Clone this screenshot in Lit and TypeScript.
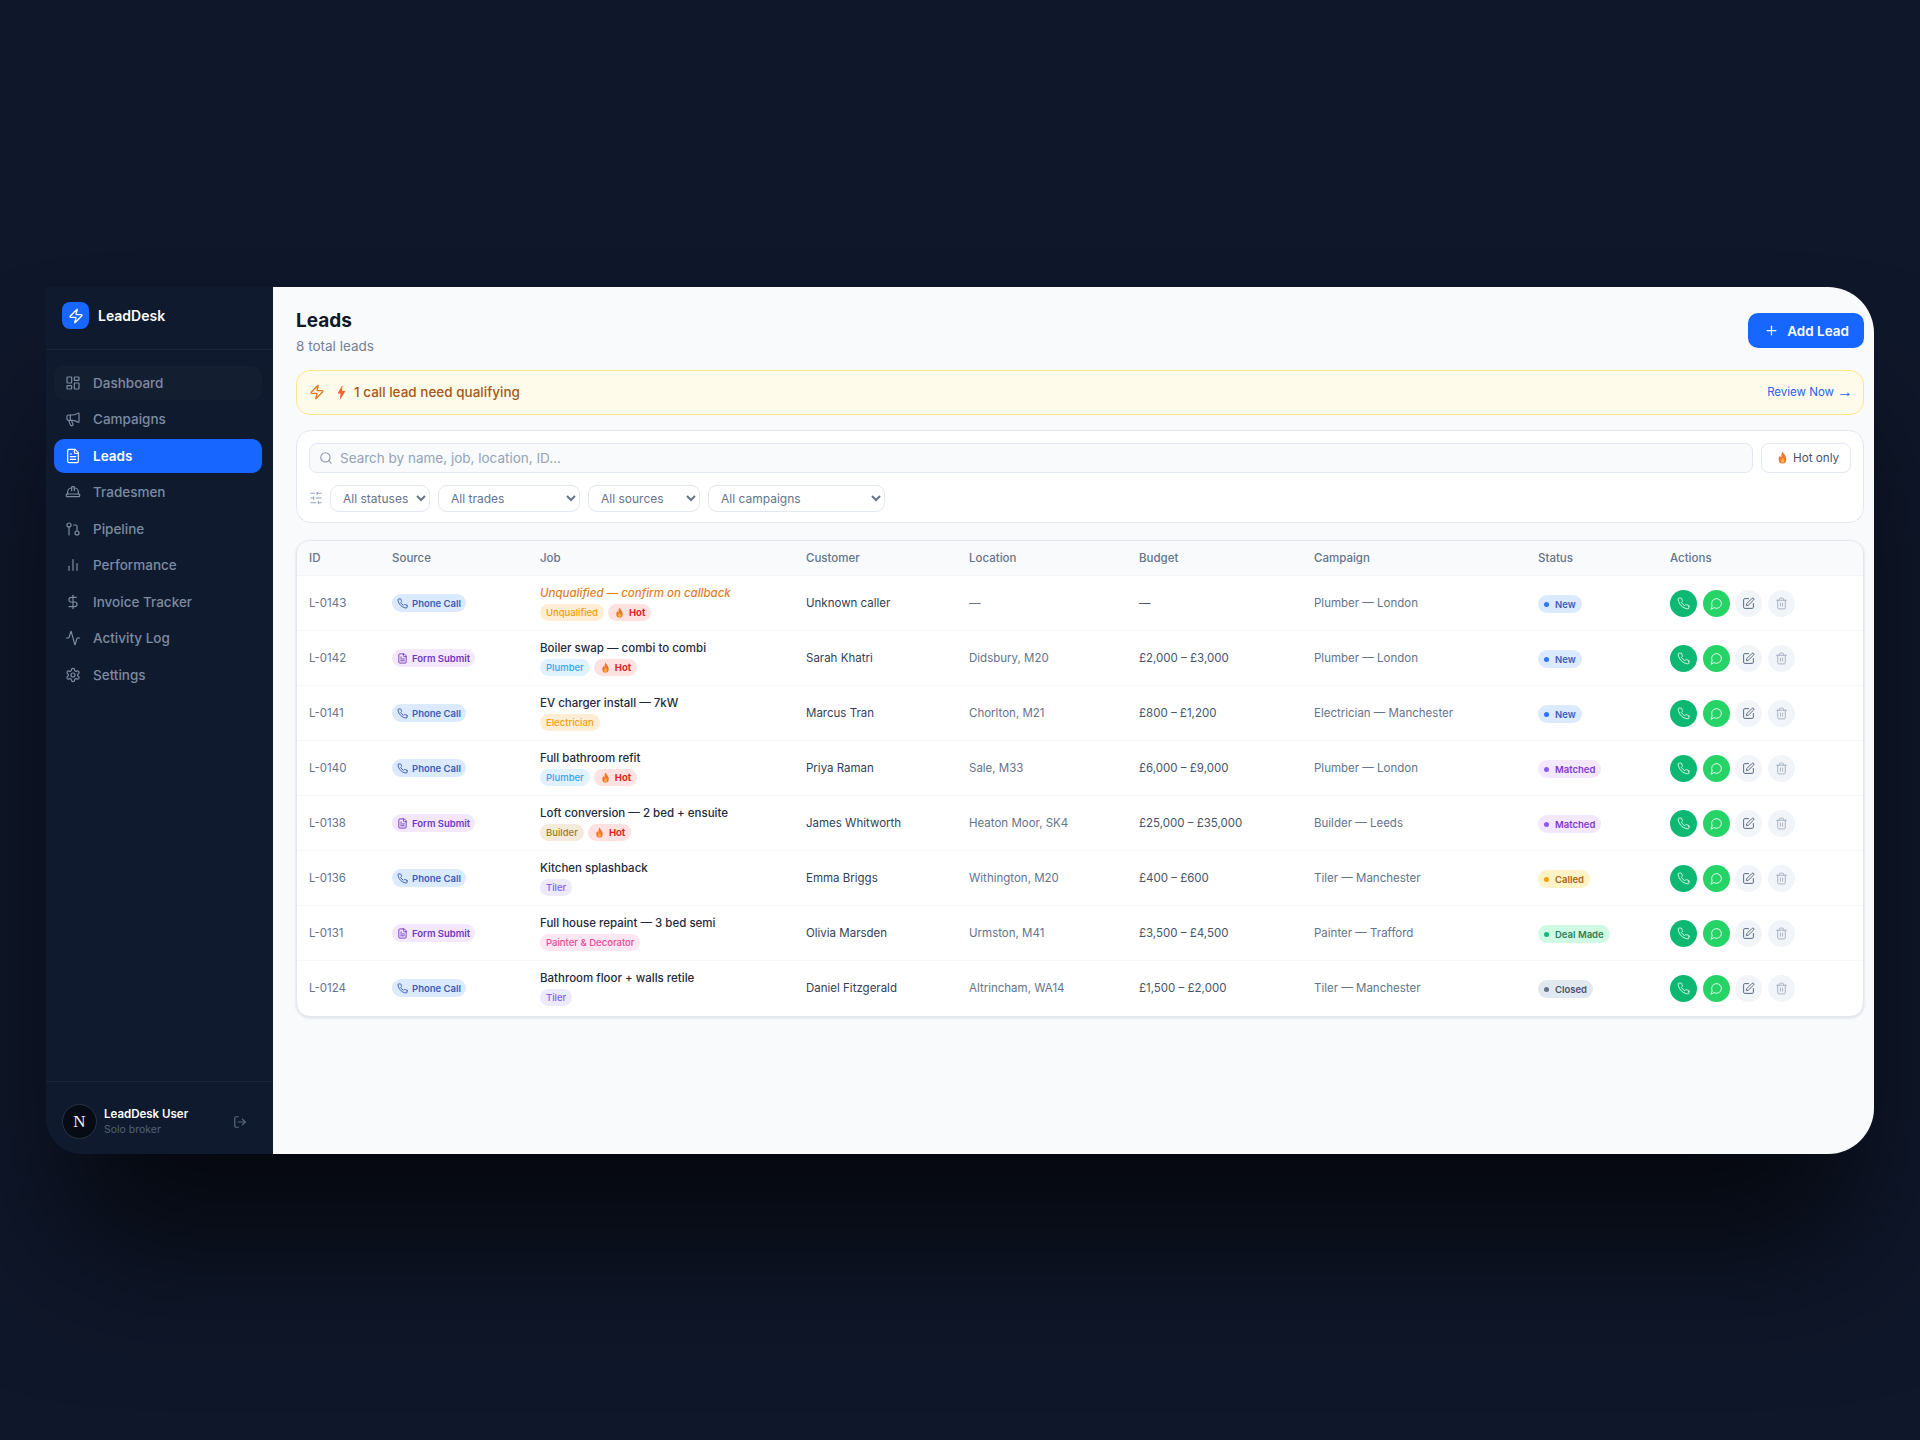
import { LitElement, css, html, svg } from "lit";
import { customElement } from "lit/decorators.js";

const ICONS: Record<string, unknown> = {
  dashboard: svg`<rect x="3" y="3" width="7" height="9" rx="1"/><rect x="14" y="3" width="7" height="5" rx="1"/><rect x="14" y="12" width="7" height="9" rx="1"/><rect x="3" y="16" width="7" height="5" rx="1"/>`,
  megaphone: svg`<path d="M11 6a13 13 0 0 0 8.400-2.800A1 1 0 0 1 21 4v12a1 1 0 0 1-1.600.8A13 13 0 0 0 11 14H5a2 2 0 0 1-2-2V8a2 2 0 0 1 2-2z"/><path d="M6 14a12 12 0 0 0 2.400 7.200 2 2 0 0 0 3.200-2.400A8 8 0 0 1 10 14"/><path d="M8 6v8"/>`,
  file: svg`<path d="M15 2H6a2 2 0 0 0-2 2v16a2 2 0 0 0 2 2h12a2 2 0 0 0 2-2V7Z"/><path d="M14 2v4a2 2 0 0 0 2 2h4"/><path d="M10 9H8"/><path d="M16 13H8"/><path d="M16 17H8"/>`,
  hat: svg`<path d="M10 10V5a1 1 0 0 1 1-1h2a1 1 0 0 1 1 1v5"/><path d="M14 6a6 6 0 0 1 6 6v3"/><path d="M4 15v-3a6 6 0 0 1 6-6"/><rect x="2" y="15" width="20" height="4" rx="1"/>`,
  pipeline: svg`<circle cx="18" cy="18" r="3"/><circle cx="6" cy="6" r="3"/><path d="M13 6h3a2 2 0 0 1 2 2v7"/><path d="M6 9v12"/>`,
  chart: svg`<path d="M18 20V10"/><path d="M12 20V4"/><path d="M6 20v-6"/>`,
  dollar: svg`<path d="M12 2v20"/><path d="M17 5H9.500a3.500 3.500 0 0 0 0 7h5a3.500 3.500 0 0 1 0 7H6"/>`,
  activity: svg`<path d="M22 12h-2.480a2 2 0 0 0-1.930 1.460l-2.350 8.360a.25.25 0 0 1-.48 0L9.240 2.180a.25.25 0 0 0-.48 0l-2.350 8.360A2 2 0 0 1 4.490 12H2"/>`,
  settings: svg`<path d="M12.220 2h-.44a2 2 0 0 0-2 2v.18a2 2 0 0 1-1 1.730l-.43.25a2 2 0 0 1-2 0l-.15-.08a2 2 0 0 0-2.730.73l-.22.38a2 2 0 0 0 .73 2.730l.15.1a2 2 0 0 1 1 1.720v.51a2 2 0 0 1-1 1.740l-.15.09a2 2 0 0 0-.73 2.730l.22.38a2 2 0 0 0 2.730.73l.15-.08a2 2 0 0 1 2 0l.43.25a2 2 0 0 1 1 1.730V20a2 2 0 0 0 2 2h.44a2 2 0 0 0 2-2v-.18a2 2 0 0 1 1-1.730l.43-.25a2 2 0 0 1 2 0l.15.08a2 2 0 0 0 2.730-.73l.22-.39a2 2 0 0 0-.73-2.730l-.15-.08a2 2 0 0 1-1-1.740v-.5a2 2 0 0 1 1-1.740l.15-.09a2 2 0 0 0 .73-2.730l-.22-.38a2 2 0 0 0-2.730-.73l-.15.08a2 2 0 0 1-2 0l-.43-.25a2 2 0 0 1-1-1.730V4a2 2 0 0 0-2-2z"/><circle cx="12" cy="12" r="3"/>`,
  zap: svg`<path d="M4 14a1 1 0 0 1-.78-1.630l9.900-10.200a.5.5 0 0 1 .86.46l-1.920 6.020A1 1 0 0 0 13 10h7a1 1 0 0 1 .78 1.630l-9.900 10.200a.5.5 0 0 1-.86-.46l1.920-6.020A1 1 0 0 0 11 14z"/>`,
  logout: svg`<path d="m16 17 5-5-5-5"/><path d="M21 12H9"/><path d="M9 21H5a2 2 0 0 1-2-2V5a2 2 0 0 1 2-2h4"/>`,
  search: svg`<circle cx="11" cy="11" r="8"/><path d="m21 21-4.300-4.300"/>`,
  sliders: svg`<path d="M21 4h-7"/><path d="M10 4H3"/><path d="M21 12h-9"/><path d="M8 12H3"/><path d="M21 20h-5"/><path d="M12 20H3"/><path d="M14 2v4"/><path d="M8 10v4"/><path d="M16 18v4"/>`,
  plus: svg`<path d="M5 12h14"/><path d="M12 5v14"/>`,
  phone: svg`<path d="M22 16.920v3a2 2 0 0 1-2.180 2 19.790 19.790 0 0 1-8.630-3.070 19.500 19.500 0 0 1-6-6 19.790 19.790 0 0 1-3.070-8.670A2 2 0 0 1 4.110 2h3a2 2 0 0 1 2 1.720 12.840 12.840 0 0 0 .7 2.810 2 2 0 0 1-.45 2.110L8.090 9.910a16 16 0 0 0 6 6l1.270-1.270a2 2 0 0 1 2.110-.45 12.840 12.840 0 0 0 2.810.7A2 2 0 0 1 22 16.920z"/>`,
  chat: svg`<path d="M7.900 20A9 9 0 1 0 4 16.100L2 22Z"/>`,
  pen: svg`<path d="M12 3H5a2 2 0 0 0-2 2v14a2 2 0 0 0 2 2h14a2 2 0 0 0 2-2v-7"/><path d="M18.375 2.625a1 1 0 0 1 3 3l-9.013 9.014a2 2 0 0 1-.853.505l-2.873.84a.5.5 0 0 1-.62-.62l.84-2.873a2 2 0 0 1 .506-.852z"/>`,
  trash: svg`<path d="M3 6h18"/><path d="M19 6v14c0 1-1 2-2 2H7c-1 0-2-1-2-2V6"/><path d="M8 6V4c0-1 1-2 2-2h4c1 0 2 1 2 2v2"/><path d="M10 11v6"/><path d="M14 11v6"/>`,
};

const NAV = [
  ["dashboard", "Dashboard"],
  ["megaphone", "Campaigns"],
  ["file", "Leads"],
  ["hat", "Tradesmen"],
  ["pipeline", "Pipeline"],
  ["chart", "Performance"],
  ["dollar", "Invoice Tracker"],
  ["activity", "Activity Log"],
  ["settings", "Settings"],
];

interface Lead {
  id: string;
  form?: boolean;
  job: string;
  trade: string;
  tradeClass: string;
  hot?: boolean;
  customer: string;
  location: string;
  budget: string;
  campaign: string;
  status: string;
}

const LEADS: Lead[] = [
  { id: "L-0143", job: "Unqualified — confirm on callback", trade: "Unqualified", tradeClass: "orange", hot: true, customer: "Unknown caller", location: "—", budget: "—", campaign: "Plumber — London", status: "New" },
  { id: "L-0142", form: true, job: "Boiler swap — combi to combi", trade: "Plumber", tradeClass: "sky", hot: true, customer: "Sarah Khatri", location: "Didsbury, M20", budget: "£2,000 – £3,000", campaign: "Plumber — London", status: "New" },
  { id: "L-0141", job: "EV charger install — 7kW", trade: "Electrician", tradeClass: "orange", customer: "Marcus Tran", location: "Chorlton, M21", budget: "£800 – £1,200", campaign: "Electrician — Manchester", status: "New" },
  { id: "L-0140", job: "Full bathroom refit", trade: "Plumber", tradeClass: "sky", hot: true, customer: "Priya Raman", location: "Sale, M33", budget: "£6,000 – £9,000", campaign: "Plumber — London", status: "Matched" },
  { id: "L-0138", form: true, job: "Loft conversion — 2 bed + ensuite", trade: "Builder", tradeClass: "tan", hot: true, customer: "James Whitworth", location: "Heaton Moor, SK4", budget: "£25,000 – £35,000", campaign: "Builder — Leeds", status: "Matched" },
  { id: "L-0136", job: "Kitchen splashback", trade: "Tiler", tradeClass: "violet", customer: "Emma Briggs", location: "Withington, M20", budget: "£400 – £600", campaign: "Tiler — Manchester", status: "Called" },
  { id: "L-0131", form: true, job: "Full house repaint — 3 bed semi", trade: "Painter & Decorator", tradeClass: "pink", customer: "Olivia Marsden", location: "Urmston, M41", budget: "£3,500 – £4,500", campaign: "Painter — Trafford", status: "Deal Made" },
  { id: "L-0124", job: "Bathroom floor + walls retile", trade: "Tiler", tradeClass: "violet", customer: "Daniel Fitzgerald", location: "Altrincham, WA14", budget: "£1,500 – £2,000", campaign: "Tiler — Manchester", status: "Closed" },
];

const COLS = [83, 148, 266, 163, 170, 175, 224, 132, 205];
const HEADS = ["ID", "Source", "Job", "Customer", "Location", "Budget", "Campaign", "Status", "Actions"];
const FILTERS = [
  ["All statuses", 100],
  ["All trades", 142],
  ["All sources", 112],
  ["All campaigns", 177],
] as const;

function icon(name: string) {
  return html`<svg class="icon" viewBox="0 0 24 24" fill="none" stroke="currentColor" stroke-width="2" stroke-linecap="round" stroke-linejoin="round">${ICONS[name]}</svg>`;
}

function flame() {
  return html`<svg class="flame" viewBox="0 0 24 24">
    <path fill="#f4742b" d="M12 1c1 4 7 7 7 14a7 8 0 0 1-14 0c0-3 1.500-5 3-6.500 0 2 .8 3 1.800 3.300C10 8 10 4 12 1z"/>
    <path fill="#fbb040" d="M12 12c.5 2 3.500 3.500 3.500 6.200a3.500 3.700 0 0 1-7 0c0-2.600 3-3.700 3.500-6.200z"/>
  </svg>`;
}

@customElement("app-root")
export class AppRoot extends LitElement {
  static styles = css`
    :host {
      display: flex;
      align-items: center;
      justify-content: center;
      width: 1920px;
      height: 1440px;
      background: #0f172a;
      font-family: Inter, "Liberation Sans", sans-serif;
      color: #1e293b;
    }
    * { box-sizing: border-box; }
    .icon { display: block; flex: none; }

    .window {
      display: flex;
      width: 1828px;
      height: 867px;
      border-radius: 0 46px 46px 36px;
      overflow: hidden;
      box-shadow: 0 110px 140px -20px rgba(0, 0, 0, 0.68);
    }

    .sidebar {
      display: flex;
      flex-direction: column;
      flex: none;
      width: 227px;
      background: #0f1a2e;
    }
    .brand {
      display: flex;
      align-items: center;
      gap: 9px;
      height: 63px;
      padding: 0 16px 4px;
      border-bottom: 1px solid #1a2538;
      color: #fff;
      font-size: 14px;
      font-weight: 600;
    }
    .brand-mark {
      display: flex;
      align-items: center;
      justify-content: center;
      width: 27px;
      height: 27px;
      border-radius: 8px;
      background: #1766ff;
    }
    .brand-mark .icon { width: 16px; height: 16px; }
    .nav {
      display: flex;
      flex-direction: column;
      gap: 2px;
      padding: 16px 11px 0 8px;
    }
    .nav-item {
      display: flex;
      align-items: center;
      gap: 12px;
      height: 34.5px;
      padding: 0 11px;
      border-radius: 10px;
      color: #7c8ba1;
      font-size: 13.5px;
      font-weight: 500;
    }
    .nav-item .icon { width: 16px; height: 16px; stroke-width: 1.8; }
    .nav-item.hover { background: #141e31; }
    .nav-item.active { background: #1766ff; color: #fff; font-weight: 600; }
    .user {
      display: flex;
      align-items: center;
      gap: 7px;
      margin-top: auto;
      height: 73px;
      padding: 8px 16px 0;
      border-top: 1px solid #1a2538;
    }
    .avatar {
      display: flex;
      align-items: center;
      justify-content: center;
      flex: none;
      width: 35px;
      height: 35px;
      border-radius: 50%;
      border: 1px solid #2a3342;
      background: #060b16;
      color: #f1f5f9;
      font-family: "Liberation Serif", serif;
      font-size: 17px;
    }
    .user-text { flex: 1; }
    .user-name { color: #fff; font-size: 11.5px; font-weight: 600; line-height: 15px; }
    .user-role { color: #526077; font-size: 10.5px; line-height: 15px; }
    .user .icon { width: 14px; height: 14px; margin-right: 10px; color: #5b6b82; }

    .main {
      flex: 1;
      padding: 19px 10px 0 23px;
      background: #f8fafc;
    }
    .head {
      display: flex;
      align-items: center;
      justify-content: space-between;
      height: 50px;
      margin-bottom: 14px;
    }
    h1 {
      margin: 0 0 1px;
      color: #0f172a;
      font-size: 19px;
      font-weight: 700;
      line-height: 30px;
    }
    .total { color: #71819a; font-size: 13.5px; line-height: 19px; }
    .add {
      display: flex;
      align-items: center;
      gap: 8px;
      height: 35px;
      padding: 0 15px 0 16px;
      border: 0;
      border-radius: 10px;
      background: #1766ff;
      color: #fff;
      font: 600 13.5px Inter, sans-serif;
    }
    .add .icon { width: 15px; height: 15px; }

    .alert {
      display: flex;
      align-items: center;
      height: 45px;
      padding: 0 10px 0 12px;
      margin-bottom: 15px;
      border: 1px solid #fde68a;
      border-radius: 14px;
      background: #fffbeb;
      color: #a8571a;
      font-size: 13.5px;
      font-weight: 500;
    }
    .alert .icon { width: 16px; height: 16px; color: #f07c1e; }
    .bolt { width: 13px; height: 15px; margin: 0 6px 0 10px; flex: none; }
    .review {
      display: flex;
      align-items: center;
      gap: 3px;
      margin-left: auto;
      color: #2563eb;
      font-size: 11.5px;
      font-weight: 400;
    }
    .arrow { font-family: "Liberation Sans", sans-serif; font-size: 16px; line-height: 1; }

    .filters {
      height: 93px;
      padding: 12px;
      margin-bottom: 17px;
      border: 1px solid #e2e8f0;
      border-radius: 15px;
      background: #fff;
    }
    .search-row { display: flex; gap: 8px; margin-bottom: 12px; }
    .search {
      display: flex;
      flex: 1;
      align-items: center;
      gap: 7px;
      height: 30px;
      padding: 0 9px;
      border: 1px solid #e2e8f0;
      border-radius: 8px;
      background: #f8fafc;
      color: #94a3b8;
      font-size: 13.5px;
    }
    .search .icon { width: 14px; height: 14px; color: #8795a8; stroke-width: 1.8; }
    .hot-only {
      display: flex;
      align-items: center;
      gap: 4px;
      width: 90px;
      height: 30px;
      padding: 0 0 0 14px;
      border: 1px solid #e2e8f0;
      border-radius: 8px;
      background: #fff;
      color: #475569;
      font: 400 11.7px Inter, sans-serif;
    }
    .hot-only .flame { width: 13px; height: 13px; }
    .select-row { display: flex; align-items: center; gap: 8px; }
    .select-row > .icon { width: 14px; height: 14px; color: #94a3b8; margin-right: -1px; stroke-width: 1.8; }
    select {
      height: 27px;
      padding: 0 1px 0 8px;
      border: 1px solid #e2e8f0;
      border-radius: 9px;
      background: #fff;
      color: #64748b;
      font: 400 12px Inter, sans-serif;
    }

    .card {
      overflow: hidden;
      border: 1px solid #e2e8f0;
      border-radius: 14px;
      background: #fff;
      box-shadow: 0 1px 3px rgba(15, 23, 42, 0.12);
    }
    table { width: 100%; border-collapse: collapse; table-layout: fixed; }
    th {
      height: 35px;
      padding: 0 0 0 12px;
      background: #f8fafc;
      border-bottom: 1px solid #f1f5f9;
      color: #64748b;
      font-size: 11.5px;
      font-weight: 500;
      text-align: left;
    }
    td {
      height: 55px;
      padding: 0 0 0 12px;
      border-bottom: 1px solid #f6f8fb;
      color: #64748b;
      font-size: 11.5px;
    }
    tr:last-child td { border-bottom: 0; }
    .customer { color: #334155; }
    .budget { color: #475569; }
    .title { color: #1e293b; font-weight: 500; line-height: 16px; margin-bottom: 3px; }
    .title.unq { color: #e0801f; font-style: italic; }
    .tags { display: flex; gap: 4px; }
    .chip {
      display: inline-flex;
      align-items: center;
      height: 17px;
      padding: 0 6px;
      border-radius: 9px;
      font-size: 9.5px;
      font-weight: 500;
      white-space: nowrap;
    }
    .orange { background: #ffedd5; color: #f59e0b; }
    .sky { background: #e0f2fe; color: #38a6f0; }
    .tan { background: #f3eadb; color: #a67a1e; }
    .violet { background: #ede9fe; color: #8b5cf6; }
    .pink { background: #fce7f3; color: #ec4899; }
    .hot { gap: 4px; background: #fee2e2; color: #dc2626; font-weight: 700; }
    .hot .flame { width: 11px; height: 11px; }
    .source { gap: 4px; height: 18px; padding: 0 5px; font-weight: 600; }
    .source .icon { width: 11px; height: 11px; }
    .source.call { background: #dbeafe; color: #3b5cb8; }
    .source.form { background: #f3e8ff; color: #7038c0; }
    .status { gap: 6px; height: 18px; padding: 0 6px; margin-top: 2px; font-weight: 600; }
    .dot { width: 5px; height: 5px; border-radius: 50%; background: currentColor; }
    .s-new { background: #dbeafe; color: #3b5cb8; }
    .s-new .dot { background: #2f74ff; }
    .s-matched { background: #f3e8ff; color: #7e3bd0; }
    .s-matched .dot { background: #8b5cf6; }
    .s-called { background: #fef3c7; color: #a9641a; }
    .s-called .dot { background: #f59e0b; }
    .s-deal-made { background: #d1fae5; color: #2a8058; }
    .s-deal-made .dot { background: #10b981; }
    .s-closed { background: #e2e8f0; color: #475569; }
    .s-closed .dot { background: #64748b; }
    .actions { display: flex; gap: 5.5px; }
    .act {
      display: flex;
      align-items: center;
      justify-content: center;
      width: 27px;
      height: 27px;
      border-radius: 50%;
      background: #f1f5f9;
      color: #56647a;
    }
    .act .icon { width: 13px; height: 13px; stroke-width: 1.8; }
    .act.call { background: #0cb872; color: #d7f7e8; }
    .act.chat { background: #25d366; color: #e6fbef; }
    .act.trash { color: #a5b1c2; }
  `;

  private renderLead(l: Lead, i: number) {
    const statusKey = "s-" + l.status.toLowerCase().replace(" ", "-");
    return html`<tr>
      <td>${l.id}</td>
      <td>
        <span class="chip source ${l.form ? "form" : "call"}">
          ${icon(l.form ? "file" : "phone")}${l.form ? "Form Submit" : "Phone Call"}
        </span>
      </td>
      <td>
        <div class="title ${i === 0 ? "unq" : ""}">${l.job}</div>
        <div class="tags">
          <span class="chip ${l.tradeClass}">${l.trade}</span>
          ${l.hot ? html`<span class="chip hot">${flame()}Hot</span>` : ""}
        </div>
      </td>
      <td class="customer">${l.customer}</td>
      <td>${l.location}</td>
      <td class="budget">${l.budget}</td>
      <td>${l.campaign}</td>
      <td><span class="chip status ${statusKey}"><span class="dot"></span>${l.status}</span></td>
      <td>
        <div class="actions">
          <span class="act call">${icon("phone")}</span>
          <span class="act chat">${icon("chat")}</span>
          <span class="act">${icon("pen")}</span>
          <span class="act trash">${icon("trash")}</span>
        </div>
      </td>
    </tr>`;
  }

  render() {
    return html`
      <div class="window">
        <aside class="sidebar">
          <div class="brand">
            <span class="brand-mark">${icon("zap")}</span>
            LeadDesk
          </div>
          <nav class="nav">
            ${NAV.map(
              ([ic, label]) => html`<div class="nav-item ${label === "Leads" ? "active" : ""} ${label === "Dashboard" ? "hover" : ""}">
                ${icon(ic)}${label}
              </div>`
            )}
          </nav>
          <div class="user">
            <span class="avatar">N</span>
            <div class="user-text">
              <div class="user-name">LeadDesk User</div>
              <div class="user-role">Solo broker</div>
            </div>
            ${icon("logout")}
          </div>
        </aside>

        <main class="main">
          <header class="head">
            <div>
              <h1>Leads</h1>
              <div class="total">8 total leads</div>
            </div>
            <button class="add">${icon("plus")}Add Lead</button>
          </header>

          <div class="alert">
            ${icon("zap")}
            <svg class="bolt" viewBox="0 0 13 15"><path fill="#f4652b" d="M7.500 0 2.500 8.500h3L4.800 15l5.700-9H7z"/></svg>
            1 call lead need qualifying
            <span class="review">Review Now <span class="arrow">→</span></span>
          </div>

          <section class="filters">
            <div class="search-row">
              <div class="search">${icon("search")}Search by name, job, location, ID...</div>
              <button class="hot-only">${flame()}Hot only</button>
            </div>
            <div class="select-row">
              ${icon("sliders")}
              ${FILTERS.map(
                ([label, width]) => html`<select style="width:${width}px"><option>${label}</option></select>`
              )}
            </div>
          </section>

          <section class="card">
            <table>
              <colgroup>${COLS.map((w) => html`<col style="width:${w}px" />`)}</colgroup>
              <thead>
                <tr>${HEADS.map((h) => html`<th>${h}</th>`)}</tr>
              </thead>
              <tbody>${LEADS.map((l, i) => this.renderLead(l, i))}</tbody>
            </table>
          </section>
        </main>
      </div>
    `;
  }
}
